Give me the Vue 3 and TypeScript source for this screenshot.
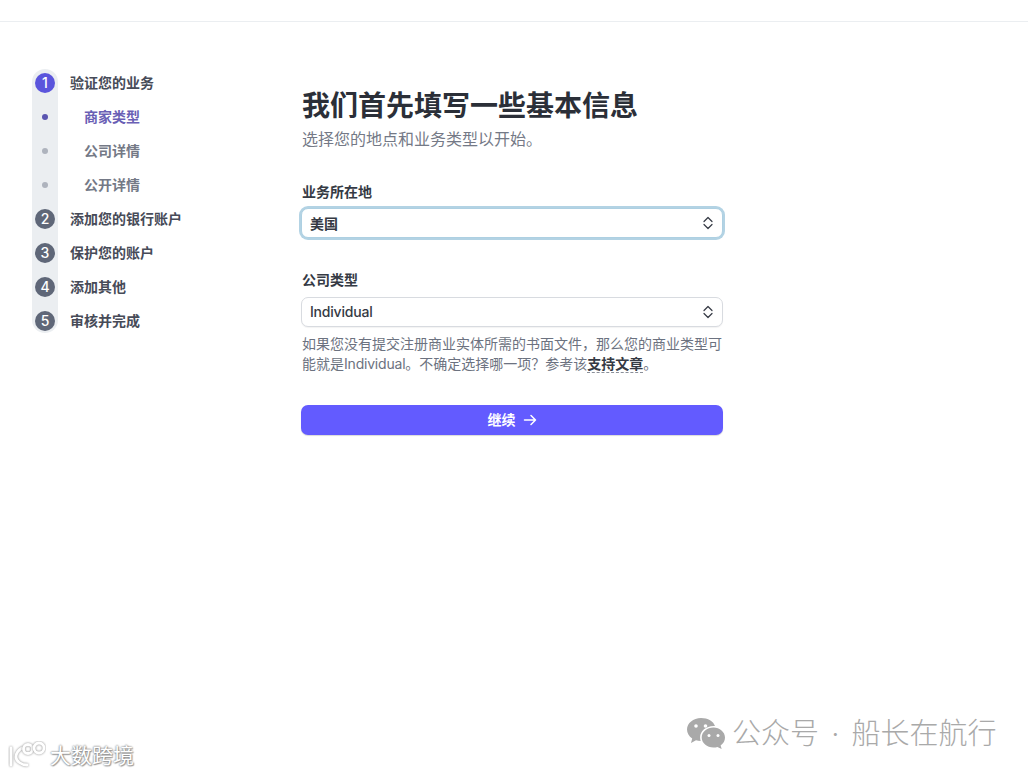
<script setup lang="ts">
interface Step {
  label: string
  num?: number
  state: 'active' | 'current' | 'todo' | 'pending'
}

const steps: Step[] = [
  { label: '验证您的业务', num: 1, state: 'active' },
  { label: '商家类型', state: 'current' },
  { label: '公司详情', state: 'pending' },
  { label: '公开详情', state: 'pending' },
  { label: '添加您的银行账户', num: 2, state: 'todo' },
  { label: '保护您的账户', num: 3, state: 'todo' },
  { label: '添加其他', num: 4, state: 'todo' },
  { label: '审核并完成', num: 5, state: 'todo' }
]
</script>

<template>
  <div class="page">
    <header class="topbar"></header>
    <div class="layout">
      <nav class="sidebar">
        <ol class="steps">
          <li v-for="s in steps" :key="s.label" class="step" :class="s.state">
            <span class="marker">
              <span v-if="s.num" class="circle">{{ s.num }}</span>
              <span v-else class="dot"></span>
            </span>
            <span class="step-label">{{ s.label }}</span>
          </li>
        </ol>
      </nav>
      <main class="form">
        <h1>我们首先填写一些基本信息</h1>
        <p class="sub">选择您的地点和业务类型以开始。</p>

        <label class="field-label first">业务所在地</label>
        <div class="select focus">
          <span class="value cjk">美国</span>
          <svg class="chev" width="12" height="16" viewBox="0 0 12 16" fill="none" stroke="#353a44" stroke-width="1.2" stroke-linecap="round" stroke-linejoin="round">
            <path d="M2 6.500 6 2.500l4 4M2 9.500l4 4 4-4" />
          </svg>
        </div>

        <label class="field-label second">公司类型</label>
        <div class="select">
          <span class="value latin">Individual</span>
          <svg class="chev" width="12" height="16" viewBox="0 0 12 16" fill="none" stroke="#353a44" stroke-width="1.2" stroke-linecap="round" stroke-linejoin="round">
            <path d="M2 6.500 6 2.500l4 4M2 9.500l4 4 4-4" />
          </svg>
        </div>
        <p class="help">如果您没有提交注册商业实体所需的书面文件，那么您的商业类型可能就是<span class="latin">Individual</span>。不确定选择哪一项？参考该<a class="link">支持文章</a>。</p>

        <button class="continue" type="button">
          <span class="btn-text">继续</span>
          <svg width="14" height="14" viewBox="0 0 14 14" fill="none" stroke="#fff" stroke-width="1.5" stroke-linecap="round" stroke-linejoin="round">
            <path d="M1.500 7h11M8 2.500 12.500 7 8 11.500" />
          </svg>
        </button>
      </main>
    </div>

    <div class="wm-right">
      <svg class="wx" width="39" height="31" viewBox="0 0 39 31">
        <path fill="#a9a9a9" d="M14 0C6.300 0 0 5.200 0 11.600c0 3.600 2 6.800 5.200 9L4 25l5-2.700c1.500.4 3 .7 4.700.7-.4-1.200-.6-2.400-.6-3.700C13.100 13 19 8 26.600 8c.5 0 1 0 1.400.1C26.700 3.400 20.900 0 14 0Z" />
        <path fill="#a9a9a9" d="M26.500 9.500C19.900 9.500 14.700 14 14.700 19.500s5.200 10 11.800 10c1.400 0 2.700-.2 3.900-.6l4.300 2.100-1.100-3.600c2.900-1.800 4.400-4.700 4.400-7.900 0-5.500-5.300-10-11.500-10Z" />
        <circle cx="9" cy="8" r="1.800" fill="#fff" />
        <circle cx="18.500" cy="8" r="1.800" fill="#fff" />
        <circle cx="22" cy="17.500" r="1.500" fill="#fff" />
        <circle cx="31" cy="17.500" r="1.500" fill="#fff" />
      </svg>
      <span class="wm-text">公众号 · 船长在航行</span>
    </div>

    <div class="wm-left">
      <svg width="38" height="30" viewBox="0 0 38 30" fill="none" stroke="#fff" stroke-width="2.800" stroke-linecap="round" stroke-linejoin="round">
        <path class="wm-shadow" d="M3 7v17" />
        <path class="wm-shadow" d="M14 7C9 10 8 13 8 16c0 4 5 8 11 8" />
        <circle class="wm-shadow" cx="20" cy="8" r="4.500" />
        <circle class="wm-shadow" cx="31" cy="7" r="5" />
      </svg>
      <span>大数跨境</span>
    </div>
  </div>
</template>

<style>
html,
body {
  margin: 0;
  background: #fff;
}
</style>

<style scoped>
.page {
  position: relative;
  height: 775px;
  overflow: hidden;
  background: #fff;
  font-family: Inter, "Noto Sans CJK SC", sans-serif;
  color: #353a44;
}
.topbar {
  height: 21px;
  border-bottom: 1px solid #ebeef1;
}
.layout {
  display: flex;
  padding: 44px 0 0 32px;
}
.sidebar {
  width: 269px;
  flex: none;
}
.steps {
  position: relative;
  list-style: none;
  margin: 0;
  padding: 0;
}
.steps::before {
  content: "";
  position: absolute;
  left: 0;
  top: 3px;
  bottom: 5px;
  width: 26px;
  background: #ebeef1;
  border-radius: 13px;
}
.step {
  position: relative;
  display: flex;
  align-items: center;
  height: 34px;
  font-size: 14px;
  font-weight: 700;
  color: #474b58;
}
.marker {
  width: 26px;
  display: flex;
  justify-content: center;
  flex: none;
}
.circle {
  width: 20px;
  height: 20px;
  border-radius: 50%;
  background: #5f6778;
  color: #fff;
  font-size: 14px;
  font-weight: 500;
  line-height: 20px;
  text-align: center;
}
.active .circle {
  background: #5b55dc;
}
.dot {
  width: 6px;
  height: 6px;
  border-radius: 50%;
  background: #aeb3bd;
}
.step-label {
  margin-left: 12px;
  padding-bottom: 2px;
}
.current .step-label,
.pending .step-label {
  margin-left: 26px;
}
.current .dot {
  background: #5a55b0;
}
.current .step-label {
  color: #6a5fb5;
}
.pending .step-label {
  color: #747986;
}
.form {
  width: 422px;
  flex: none;
  padding-top: 22px;
}
h1 {
  margin: 0;
  font-size: 28px;
  line-height: 36px;
  font-weight: 700;
  color: #2b2f38;
  padding-left: 1px;
}
.sub {
  margin: 3px 0 0;
  font-size: 16px;
  line-height: 24px;
  color: #747986;
  padding-left: 1px;
}
.field-label {
  display: block;
  font-size: 14px;
  line-height: 20px;
  font-weight: 700;
  color: #353a44;
  padding-left: 1px;
}
.first {
  margin-top: 31px;
}
.second {
  margin-top: 32px;
}
.select {
  box-sizing: border-box;
  height: 30px;
  margin-top: 7px;
  display: flex;
  align-items: center;
  justify-content: space-between;
  padding: 0 8px 0 8px;
  border: 1px solid #d8dbe0;
  border-radius: 7px;
  background: #fff;
  font-size: 14px;
  font-weight: 500;
  box-shadow: 0 1px 1px rgba(0, 0, 0, 0.05);
}
.select.focus {
  margin-top: 6px;
  border-color: #aed0e2;
  box-shadow: 0 0 0 2px #b3d3e4;
}
.value {
  padding-bottom: 1px;
}
.value.cjk {
  font-weight: 700;
}
.latin {
  letter-spacing: -0.2px;
}
.chev {
  flex: none;
}
.help {
  margin: 7px 0 0;
  padding-left: 1px;
  font-size: 14px;
  line-height: 20px;
  color: #6c7280;
}
.link {
  font-weight: 700;
  color: #353a44;
  border-bottom: 1px dashed #8a8f99;
}
.continue {
  width: 100%;
  height: 30px;
  margin-top: 31px;
  border: 0;
  border-radius: 7px;
  background: #635bff;
  color: #fff;
  font-family: inherit;
  font-size: 14px;
  font-weight: 700;
  display: flex;
  align-items: center;
  justify-content: center;
  gap: 7px;
  box-shadow: 0 1px 1px rgba(0, 0, 0, 0.15);
}
.btn-text {
  padding-bottom: 2px;
}
.wm-right {
  position: absolute;
  left: 687px;
  top: 717px;
  display: flex;
  align-items: flex-start;
  gap: 6px;
  color: #a9a9a9;
  font-size: 29px;
  line-height: 34px;
  font-weight: 300;
  white-space: nowrap;
}
.wx {
  margin-top: 1px;
}
.wm-text {
  word-spacing: 4px;
}
.wm-left {
  position: absolute;
  left: 8px;
  top: 741px;
  display: flex;
  align-items: center;
  gap: 4px;
  color: #fff;
  font-size: 21px;
  line-height: 30px;
  font-weight: 400;
  white-space: nowrap;
  text-shadow: 0 0 2px #888, 0 0 2px #888, 1px 1px 1px #aaa;
}
.wm-shadow {
  filter: drop-shadow(0 0 1px #888);
}
</style>
